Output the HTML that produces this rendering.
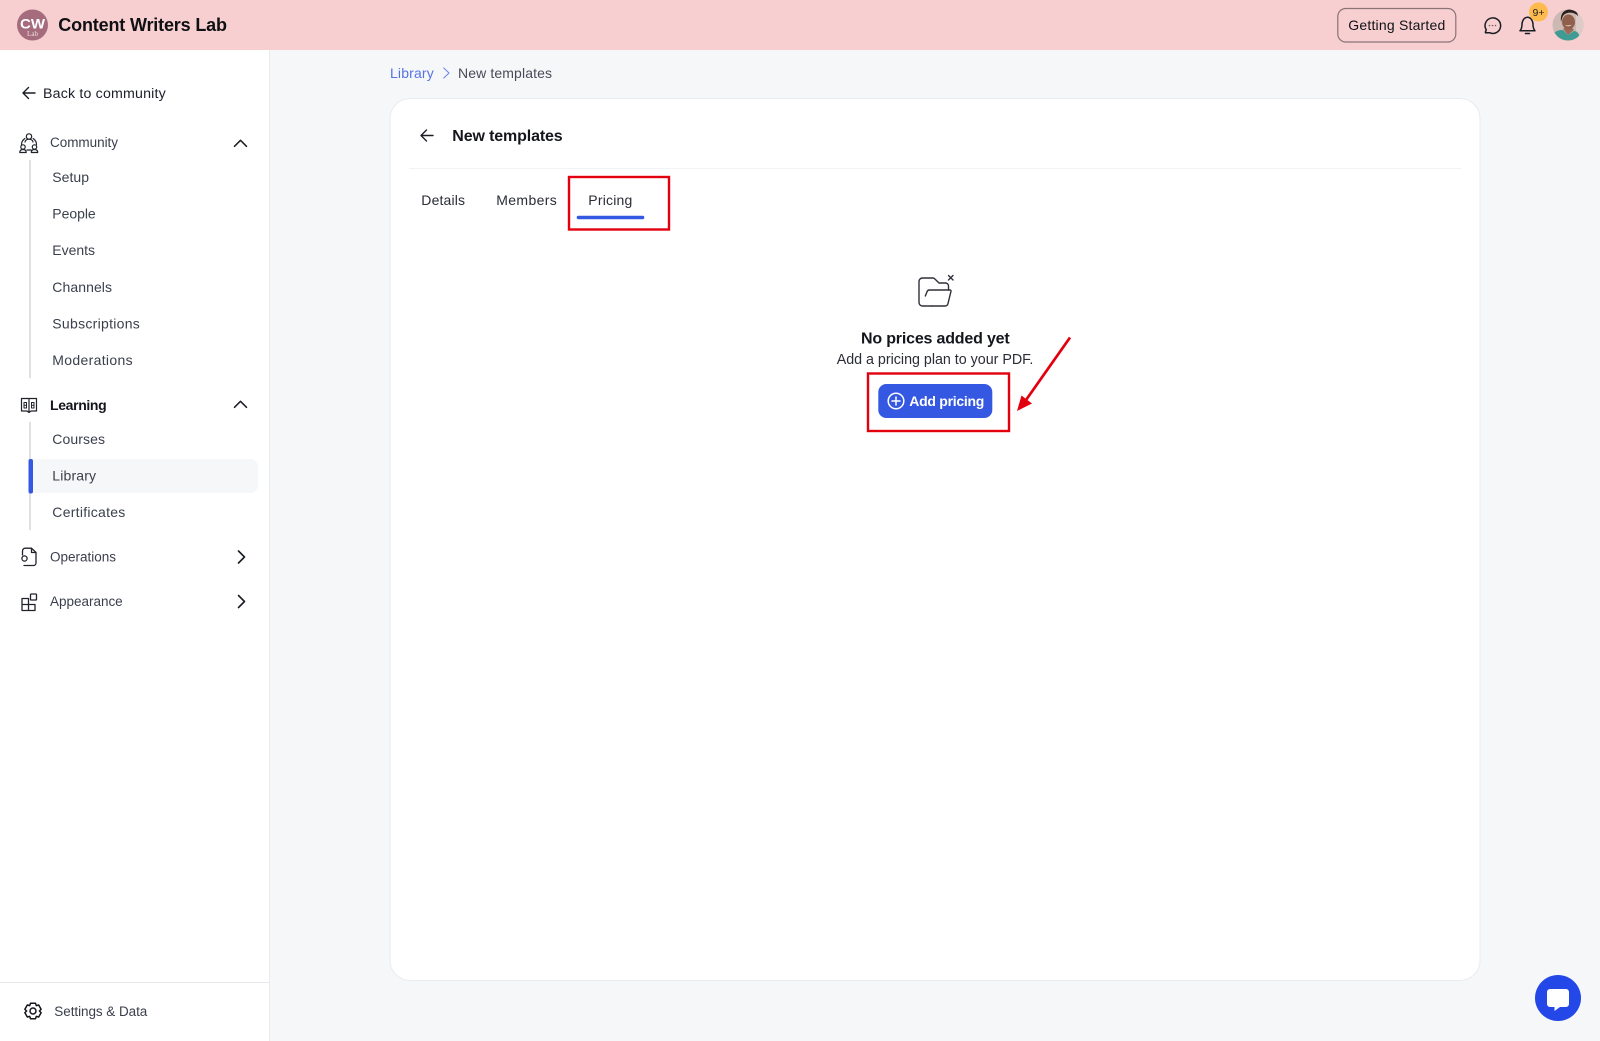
<!DOCTYPE html>
<html lang="en">
<head>
<meta charset="utf-8">
<title>New templates - Pricing</title>
<style>
html,body{margin:0;padding:0;width:1600px;height:1041px;overflow:hidden;background:#f6f7f9}
svg{display:block}
text{font-family:"Liberation Sans",sans-serif;fill:#1f2430;font-size:14.5px}
.sub{fill:#3a3f4c}
.st{fill:none;stroke:#1a1d24;stroke-width:1.5;stroke-linecap:round;stroke-linejoin:round}
.thin{fill:none;stroke:#20232b;stroke-width:1.2;stroke-linecap:round;stroke-linejoin:round}
</style>
</head>
<body>
<svg xmlns="http://www.w3.org/2000/svg" width="1600" height="1041" viewBox="0 0 1600 1041">
  <rect width="1600" height="1041" fill="#f6f7f9"/>

  <!-- Header -->
  <rect width="1600" height="50" fill="#f7cfd0"/>
  <circle cx="32.5" cy="25" r="15.5" fill="#a56c7e"/>
  <text x="20" y="28.500" textLength="25" lengthAdjust="spacingAndGlyphs" style="font-size:14px;font-weight:700;fill:#fff">CW</text>
  <text x="27" y="36" textLength="11" lengthAdjust="spacingAndGlyphs" style="font-family:'Liberation Serif',serif;font-size:7px;fill:#f3dfe3">Lab</text>
  <text x="58.3" y="31" textLength="168.7" style="font-size:18px;font-weight:700;fill:#0e1014">Content Writers Lab</text>

  <rect x="1337.8" y="8.5" width="118" height="33.5" rx="8" fill="#f7cfd0" stroke="#8b7376" stroke-width="1.2"/>
  <text x="1348.3" y="30" textLength="97" style="font-size:14px;fill:#111318">Getting Started</text>

  <!-- chat icon -->
  <path class="st" d="M1486.500 32.800 c-.6.3-1.400-.1-1.100-.9 l.9-2 a7.800 7.800 0 1 1 3.200 2.800 z"/>
  <circle cx="1489.500" cy="25.500" r=".8" fill="#6b5d60"/><circle cx="1492.500" cy="25.500" r=".8" fill="#6b5d60"/><circle cx="1495.500" cy="25.500" r=".8" fill="#6b5d60"/>
  <!-- bell -->
  <path class="st" d="M1520 30.800 h15 c-1.400-1.700-2-3.400-2-6.300 c0-3.800-2.300-7.300-5.500-7.300 s-5.500 3.500-5.500 7.300 c0 2.900-.6 4.600-2 6.300 z"/>
  <path d="M1525.500 33.500 h4" stroke="#1a1d24" stroke-width="1.600" stroke-linecap="round"/>
  <circle cx="1538.500" cy="12" r="9.500" fill="#fdbb4d"/>
  <text x="1532.500" y="16" textLength="12" style="font-size:10.500px;fill:#222">9+</text>
  <!-- avatar -->
  <clipPath id="av"><circle cx="1568" cy="25" r="15.500"/></clipPath>
  <g clip-path="url(#av)">
    <rect x="1552" y="9" width="32" height="32" fill="#cdb9b3"/>
    <rect x="1576" y="9" width="8" height="32" fill="#dccbc6"/>
    <path d="M1554 33 c3-3 7-3 9-3 l5 5 6-4 c3 0 5 2 6 7 l-6 4 h-16 z" fill="#3f9c95"/>
    <path d="M1563 29 l5 6 6-5 -3-3 h-5 z" fill="#9d6b58"/>
    <ellipse cx="1568.500" cy="22" rx="6.500" ry="7.500" fill="#8f5f4c"/>
    <path d="M1561 22 c-1-7 2-12 8-12.500 s9 3 9 7 c-1-2-3-3-5-3.500 c-4-1-8 0-10 3 c-1 2-1.500 4-2 6 z" fill="#2b1f1d"/>
    <path d="M1564.500 25 q4 2.800 7.500 -.2 q-4 1.200-7.500 .2 z" fill="#f3e8e2"/>
  </g>

  <!-- Sidebar -->
  <rect x="0" y="50" width="269" height="991" fill="#fff"/>
  <rect x="269" y="50" width="1" height="991" fill="#e9ebee"/>

  <path class="st" d="M35 93 H23 M28.500 87.500 L23 93 L28.500 98.500" style="stroke-width:1.400"/>
  <text x="43" y="98" textLength="122.700" style="font-size:14.200px;fill:#1c1f28">Back to community</text>

  <!-- community icon -->
  <g class="thin">
    <circle cx="29" cy="136.500" r="2.700"/>
    <path d="M25 142 c.4-1.800 2-2.800 4-2.800 s3.600 1 4 2.800"/>
    <path d="M24.800 138.500 c-2 1.500-3.300 3.800-3.300 6 M33.200 138.500 c2 1.500 3.300 3.800 3.300 6 M27 150 h4"/>
    <circle cx="23" cy="147" r="2.200"/>
    <path d="M19.800 152.500 c0-2 1.300-3 3.200-3 s3.200 1 3.200 3 z"/>
    <circle cx="34.500" cy="147" r="2.200"/>
    <path d="M31.300 152.500 c0-2 1.300-3 3.200-3 s3.200 1 3.200 3 z"/>
  </g>
  <text x="50" y="147" textLength="68" class="sub" style="font-size:13.500px">Community</text>
  <path class="st" d="M234.500 146.300 L240.500 140.300 L246.500 146.300" style="stroke-width:1.500"/>

  <rect x="29" y="160" width="2" height="218" fill="#dfe1e5"/>
  <text class="sub" x="52.300" y="182" textLength="36.700" style="font-size:14px">Setup</text>
  <text class="sub" x="52.300" y="218.500" textLength="43.400" style="font-size:14px">People</text>
  <text class="sub" x="52.300" y="255.200" textLength="42.700" style="font-size:14px">Events</text>
  <text class="sub" x="52.300" y="292" textLength="59.700" style="font-size:14px">Channels</text>
  <text class="sub" x="52.300" y="328.700" textLength="87.500" style="font-size:14px">Subscriptions</text>
  <text class="sub" x="52.300" y="365" textLength="80.300" style="font-size:14px">Moderations</text>

  <!-- learning icon -->
  <g class="thin">
    <path d="M29 398.500 H21.500 V411 H27 L29 412.500 L31 411 H36.500 V398.500 Z M29 398.500 V412"/>
    <path d="M24 402.500 h2.500 V408 h-2.500 Z M31.500 402.500 h2.500 V408 h-2.500 Z M24 405.200 h2.500 M31.500 405.200 h2.500" style="stroke-width:1"/>
  </g>
  <text x="50" y="410" textLength="56.700" style="font-size:14px;font-weight:700;fill:#14161c">Learning</text>
  <path class="st" d="M234.500 407.300 L240.500 401.300 L246.500 407.300" style="stroke-width:1.500"/>

  <rect x="29" y="422" width="2" height="108" fill="#dfe1e5"/>
  <path d="M33 459 H250 a8 8 0 0 1 8 8 V485 a8 8 0 0 1 -8 8 H33 Z" fill="#f6f7f9"/>
  <rect x="28.500" y="459" width="4.500" height="34.500" rx="2" fill="#3558e2"/>
  <text class="sub" x="52.300" y="444" textLength="52.700" style="font-size:14px">Courses</text>
  <text class="sub" x="52.300" y="480.500" textLength="43.700" style="font-size:14px">Library</text>
  <text class="sub" x="52.300" y="517" textLength="73" style="font-size:14px">Certificates</text>

  <!-- operations icon -->
  <g class="thin" style="stroke-width:1.300">
    <path d="M22.500 555 V551 a2.800 2.800 0 0 1 2.800-2.800 H31.500 L36 552.500 V563 a2.500 2.500 0 0 1 -2.500 2.500 H24"/>
    <path d="M31.500 548.500 V552.500 H36"/>
    <circle cx="24.500" cy="558.500" r="2.600"/>
  </g>
  <text x="50" y="561.700" textLength="66" class="sub" style="font-size:13.500px">Operations</text>
  <path class="st" d="M238.500 551 L244.500 557 L238.500 563" style="stroke-width:1.600"/>

  <!-- appearance icon -->
  <g class="thin" style="stroke-width:1.300">
    <path d="M22 598.500 H28.500 V610.500 H22 Z M22 604.500 H35 V610.500 H28.500"/>
    <rect x="30.500" y="594" width="6" height="6" rx=".8"/>
  </g>
  <text x="50" y="606" textLength="72.700" class="sub" style="font-size:13.500px">Appearance</text>
  <path class="st" d="M238.500 595.500 L244.500 601.500 L238.500 607.500" style="stroke-width:1.600"/>

  <!-- settings -->
  <rect x="0" y="982" width="269" height="1" fill="#e6e8eb"/>
  <path class="thin" style="stroke-width:1.500;stroke:#14161c" d="M30.500 1003.200 h5 l.8 2.400 2.400-.6 2.400 4.300 -1.700 1.700 1.700 1.700 -2.400 4.300 -2.400-.6 -.8 2.400 h-5 l-.8-2.400 -2.400.6 -2.400-4.300 1.700-1.700 -1.700-1.700 2.400-4.300 2.400.6 z"/>
  <circle class="thin" style="stroke-width:1.500;stroke:#14161c" cx="33" cy="1011" r="3"/>
  <text x="54.300" y="1016" textLength="93" class="sub" style="font-size:13.500px">Settings &amp; Data</text>

  <!-- Breadcrumb -->
  <text x="390" y="77.800" textLength="43.700" style="font-size:14px;fill:#5673e4">Library</text>
  <path d="M443.800 68 L449 73 L443.800 78" fill="none" stroke="#6f88e8" stroke-width="1.100" stroke-linecap="round" stroke-linejoin="round"/>
  <text x="458" y="77.800" textLength="94" style="font-size:14px;fill:#464b57">New templates</text>

  <!-- Card -->
  <rect x="390" y="98.500" width="1090" height="882" rx="20" fill="#fff" stroke="#e9ebef"/>
  <path class="st" d="M433 135.500 H421 M426.500 130 L421 135.500 L426.500 141" style="stroke-width:1.400"/>
  <text x="452.300" y="141" textLength="110.400" style="font-size:16px;font-weight:700;fill:#14161c">New templates</text>
  <rect x="409" y="168" width="1052" height="1" fill="#f2f3f5"/>

  <text x="421.300" y="205" textLength="43.700" style="font-size:14px;fill:#2a2d36">Details</text>
  <text x="496.300" y="205" textLength="60.400" style="font-size:14px;fill:#2a2d36">Members</text>
  <text x="588.300" y="205" textLength="44" style="font-size:14px;fill:#2a2d36">Pricing</text>
  <rect x="576.700" y="215.800" width="67.600" height="3.400" rx="1.700" fill="#3558e2"/>
  <rect x="569" y="177" width="100" height="52.500" fill="none" stroke="#e3000e" stroke-width="2.400"/>

  <!-- Empty state -->
  <path d="M932 306 H922.500 a3.500 3.500 0 0 1 -3.500-3.500 V281.500 a3.500 3.500 0 0 1 3.500-3.500 H933 a2 2 0 0 1 1.500.6 L939 283 H945.500 a3 3 0 0 1 3 3 V290" fill="none" stroke="#2e3138" stroke-width="1.400" stroke-linecap="round" stroke-linejoin="round"/>
  <path d="M925.300 296 L927 291.800 a2.500 2.500 0 0 1 2.300-1.800 H950 a1 1 0 0 1 1 1.200 L948 303.500 a3 3 0 0 1 -3 2.500 H932" fill="none" stroke="#2e3138" stroke-width="1.400" stroke-linecap="round" stroke-linejoin="round"/>
  <path d="M948.500 275.500 L953 280 M953 275.500 L948.500 280" stroke="#2e3138" stroke-width="1.400" stroke-linecap="round"/>

  <text x="861" y="343.300" textLength="148.700" style="font-size:16px;font-weight:700;fill:#14161c">No prices added yet</text>
  <text x="836.700" y="364" textLength="196.600" style="font-size:14.300px;fill:#2a2d36">Add a pricing plan to your PDF.</text>

  <rect x="868" y="373.500" width="141" height="57.500" fill="none" stroke="#e3000e" stroke-width="2.400"/>
  <rect x="878.300" y="384" width="114" height="34" rx="8" fill="#3558e2"/>
  <circle cx="896" cy="401" r="7.800" fill="none" stroke="#fff" stroke-width="1.500"/>
  <path d="M896 397 V405 M892 401 H900" stroke="#fff" stroke-width="1.500" stroke-linecap="round"/>
  <text x="909.300" y="406" textLength="75" style="font-size:14px;font-weight:700;fill:#fff">Add pricing</text>

  <!-- Red arrow -->
  <path d="M1070 337.500 L1026 400" stroke="#e3000e" stroke-width="2.700" fill="none"/>
  <path d="M1017 411 L1021.500 395.500 L1032 403.500 Z" fill="#e3000e"/>

  <!-- Chat widget -->
  <circle cx="1558" cy="998" r="23" fill="#2447e8"/>
  <path d="M1550 989 H1566 a3 3 0 0 1 3 3 V1004 a3 3 0 0 1 -3 3 H1560 L1554.500 1011 V1007 H1550 a3 3 0 0 1 -3-3 V992 a3 3 0 0 1 3-3 Z" fill="#fff"/>
</svg>
</body>
</html>
